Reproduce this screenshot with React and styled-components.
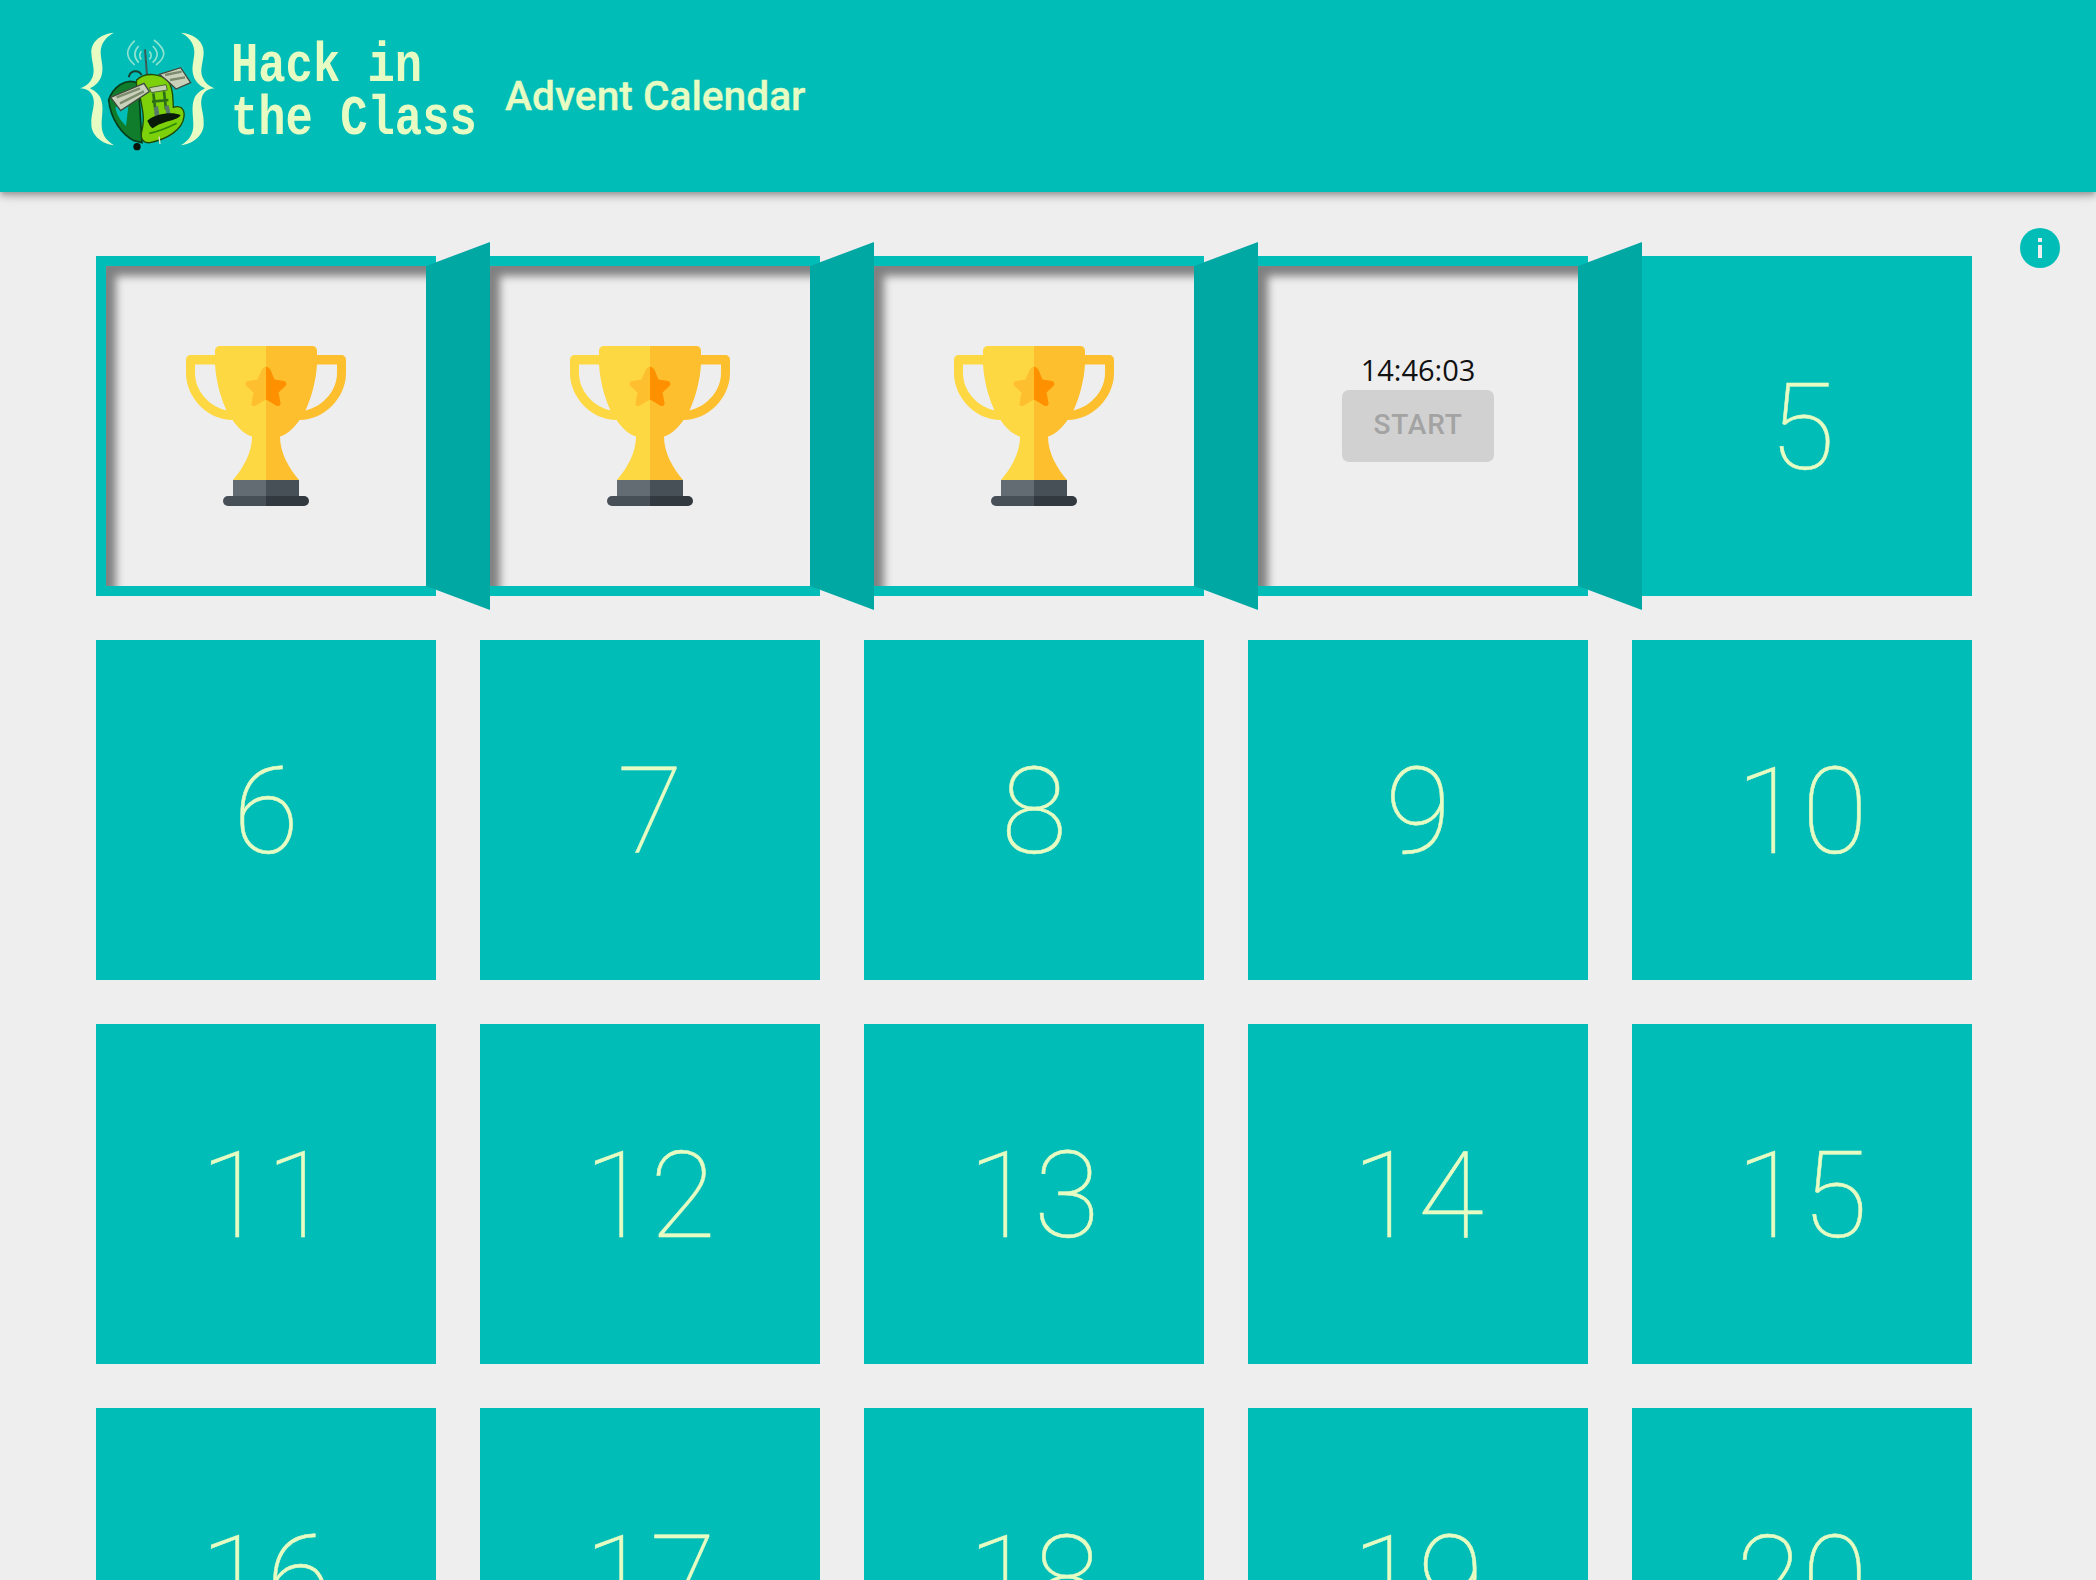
import styled, { createGlobalStyle } from 'styled-components'

const TEAL = '#00bdb8'
const CREAM = '#e6fcc2'

const GlobalStyle = createGlobalStyle`
    html, body { margin: 0; height: 100%; overflow: hidden; }
    body { background: #eee; font-family: Roboto, "Liberation Sans", sans-serif; }
`

const Header = styled.header`
    height: 192px;
    padding: 20px 0 0 70px;
    box-sizing: border-box;
    display: flex;
    align-items: flex-start;
    background: ${TEAL};
    box-shadow: 0 3px 5px -1px rgba(0,0,0,.2), 0 5px 7px rgba(0,0,0,.14), 0 2px 14px rgba(0,0,0,.12);
    position: relative;
`

const LogoMark = styled.svg`
    width: 160px;
    height: 140px;
    flex: none;
    filter: blur(.4px);
`

const LogoText = styled.div`
    width: 274px;
    margin-left: 1px;
    padding-top: 17px;
    font: 700 45.5px/44px "Liberation Mono", monospace;
    color: ${CREAM};
    white-space: pre;
    transform: scaleY(1.2);
    transform-origin: top left;
    filter: blur(.5px);
`

const Title = styled.h1`
    margin: 53px 0 0;
    font: 500 40.7px/46px Roboto, sans-serif;
    color: ${CREAM};
    -webkit-text-stroke: .3px ${CREAM};
`

const Main = styled.main`
    display: flex;
    align-items: flex-start;
    padding: 36px 36px 0 96px;
`

const Grid = styled.div`
    display: grid;
    grid-template-columns: repeat(5, 340px);
    grid-auto-rows: 340px;
    gap: 44px;
    margin-top: 28px;
`

const Cell = styled.div`
    position: relative;
    box-sizing: border-box;
    padding-top: 3px;
    display: flex;
    align-items: center;
    justify-content: center;
    background: ${TEAL};
    color: ${CREAM};
    font: 100 120px/1 Roboto, sans-serif;
    -webkit-text-stroke: .5px ${CREAM};
`

const OpenCell = styled(Cell)`
    flex-direction: column;
    background: #eee;
    border: 10px solid ${TEAL};
    box-shadow: inset 10px 10px 8px #808080;
    padding-top: 0;
    padding-bottom: ${p => (p.$pending ? '43px' : '0')};
    -webkit-text-stroke: 0;
`

const Door = styled.div`
    position: absolute;
    z-index: 1;
    left: 320px;
    top: -24px;
    width: 64px;
    height: 368px;
    background: #00a8a3;
    clip-path: polygon(0 24px, 100% 0, 100% 100%, 0 344px);
`

const Countdown = styled.div`
    padding-top: 2px;
    font: 400 29px/41px "Open Sans", sans-serif;
    color: #111;
`

const StartButton = styled.button`
    width: 152px;
    height: 72px;
    border: 0;
    border-radius: 7px;
    padding: 0 0 2px;
    background: #d1d1d1;
    color: #a3a3a3;
    font: 500 28px/1 Roboto, sans-serif;
    letter-spacing: .8px;
`

const InfoButton = styled.svg`
    width: 40px;
    height: 40px;
    margin-left: 48px;
    flex: none;
`

const BRACE = 'M132 38C100 40 62 60 64 100C66 130 76 150 68 170C60 190 45 200 30 205C50 206 66 215 70 235C76 260 62 280 64 315C66 350 100 372 132 376C110 362 95 345 95 315C95 285 102 262 92 235C86 220 72 212 60 205C75 198 90 185 95 165C102 140 92 120 92 95C92 70 110 48 132 38Z'

function Logo() {
    return (
        <LogoMark viewBox="0 0 480 420">
            <path d={BRACE} fill={CREAM} />
            <path d={BRACE} fill={CREAM} transform="matrix(-1 0 0 1 465 0)" />
            <g fill="none" stroke="#8fe3cf" strokeWidth="5">
                <path d="M194 135C166 110 166 90 194 62M206 128C190 110 190 95 206 78M214 118C207 110 207 103 214 94" />
                <path d="M258 135C290 110 290 90 252 60M248 128C266 110 266 95 248 78M238 118C246 110 246 103 238 94" />
            </g>
            <path d="M225 88L231 165" stroke="#3d5a57" strokeWidth="6" />
            <path d="M176 172C181 150 205 148 215 165" fill="none" stroke="#14432e" strokeWidth="6" />
            <path d="M116 240C128 205 165 170 205 190L216 368L192 362C158 345 122 300 116 240Z" fill="#0f7d2c" stroke="#073c18" strokeWidth="5" />
            <path d="M136 262L176 252L168 318C150 300 140 285 136 262Z" fill={TEAL} />
            <path d="M200 180C225 155 275 160 295 185C312 205 308 240 310 262C330 255 345 265 342 290C338 330 290 358 240 368C225 370 212 362 214 340C222 310 222 290 214 250C210 220 195 205 200 180Z" fill="#7dd10a" stroke="#1c4a08" strokeWidth="4" />
            <path d="M122 232L222 190L238 215L152 272Z" fill="#c9d1ba" stroke="#3f4a3c" strokeWidth="4" />
            <path d="M268 163L332 143L362 188L318 207L292 182Z" fill="#c9d1ba" stroke="#3f4a3c" strokeWidth="4" />
            <g fill="none" stroke="#7d8b6e" strokeWidth="7">
                <path d="M140 232L210 205M150 250L222 214M285 165L335 155M300 180L345 172" />
            </g>
            <path d="M238 203L288 194L292 210L244 218Z" fill="#c3d0b4" stroke="#4b6b30" strokeWidth="3" />
            <path d="M250 220L256 270M282 214L288 268M246 245L295 240" stroke="#2c6e18" strokeWidth="8" fill="none" />
            <path d="M252 262L264 258L268 286L254 288ZM284 258L296 256L302 282L290 285Z" fill="#58796a" />
            <path d="M232 302C260 280 305 275 332 285C320 305 280 300 248 325C240 320 236 310 232 302Z" fill="#0a1a08" />
            <path d="M238 340C265 335 300 320 320 310" fill="none" stroke="#2c8a0a" strokeWidth="5" />
            <circle cx="201" cy="380" r="11" fill="#07140a" />
            <path d="M267 350L270 372" stroke="#dfe6c8" strokeWidth="4" />
        </LogoMark>
    )
}

function Trophy() {
    const half = 'M34 0L80 0L80 134L47 134C58 121 66 106 66 90.500C58 88 52 82 46.500 74C22 74 0 52 0 27L0 14C0 11 2 9 5 9L29 9L29 5C29 2 31 0 34 0ZM29 18.500L9 18.500L9 27C9 44 22 60 40.500 64.500C34 50 30 34 29 18.500Z'
    const star = 'M80 20.700C78 20.700 76.500 22 75.500 24L71.500 33.500L62 35C59.500 35.500 59 38.500 60.500 40L67.500 46.500L65.500 57C65 59.500 67.500 61 70 59.500L80 53.500Z'
    return (
        <svg width="160" height="160" viewBox="0 0 160 160">
            <path d={half} fill="#fed843" fillRule="evenodd" />
            <path d={half} fill="#fdbf2d" fillRule="evenodd" transform="matrix(-1 0 0 1 160 0)" />
            <path d={star} fill="#fdbf2d" />
            <path d={star} fill="#ff9100" transform="matrix(-1 0 0 1 160 0)" />
            <rect x="47" y="134" width="33" height="17" fill="#636b73" />
            <rect x="80" y="134" width="33" height="17" fill="#474f57" />
            <path d="M80 150L42 150A5 5 0 0 0 42 160L80 160Z" fill="#474f57" />
            <path d="M80 150L118 150A5 5 0 0 1 118 160L80 160Z" fill="#32393f" />
        </svg>
    )
}

export default function App() {
    const days = Array.from({ length: 24 }, (_, i) => i + 1)

    return (
        <>
            <GlobalStyle />
            <Header>
                <Logo />
                <LogoText>{'Hack in\nthe Class'}</LogoText>
                <Title>Advent Calendar</Title>
            </Header>
            <Main>
                <Grid>
                    {days.map(day => {
                        if (day < 4) {
                            return <OpenCell key={day}><Trophy /><Door /></OpenCell>
                        }
                        if (day === 4) {
                            return (
                                <OpenCell key={day} $pending>
                                    <Countdown>14:46:03</Countdown>
                                    <StartButton disabled>START</StartButton>
                                    <Door />
                                </OpenCell>
                            )
                        }
                        return <Cell key={day}>{day}</Cell>
                    })}
                </Grid>
                <InfoButton viewBox="0 0 40 40">
                    <circle cx="20" cy="20" r="20" fill={TEAL} />
                    <rect x="18" y="10" width="4" height="4" fill="#eee" />
                    <rect x="18" y="17" width="4" height="13" fill="#eee" />
                </InfoButton>
            </Main>
        </>
    )
}
